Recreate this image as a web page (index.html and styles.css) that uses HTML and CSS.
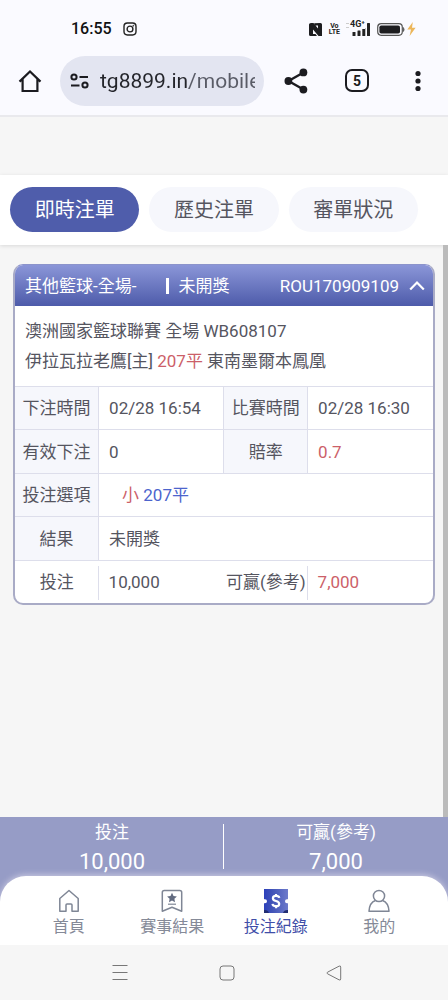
FILE: index.html
```html
<!DOCTYPE html>
<html lang="zh-Hant">
<head>
<meta charset="utf-8">
<meta name="viewport" content="width=device-width, initial-scale=1">
<title>投注紀錄</title>
<link rel="stylesheet" href="styles.css">
</head>
<body>
<header class="chrome">
  <div class="status">
    <div class="status-left">
      <time class="clock">16:55</time>
      <svg width="14" height="14" viewBox="0 0 14 14" fill="none" stroke="#222" stroke-width="1.4"><rect x="1" y="1" width="12" height="12" rx="3.4"/><circle cx="7" cy="7" r="2.9"/><circle cx="10.3" cy="3.7" r=".5" fill="#222" stroke-width=".6"/></svg>
    </div>
    <div class="status-right">
      <svg width="13" height="13" viewBox="0 0 13 13"><path d="M2 0h2.500L9 5.500V2.500H6.500L5 .3 11.500 0q1.500 0 1.500 1.500V13H9.500L4 6.500V11h2.500L8 13H1.500Q0 13 0 11.500V1.500Q0 0 2 0z" fill="#1d1d20"/></svg>
      <div class="volte"><span>Vo</span><span>LTE</span></div>
      <div class="signal">
        <span class="sim"></span>
        <svg width="19" height="13" viewBox="0 0 19 13" fill="#222"><rect x="1.5" y="9" width="3" height="4" rx=".5"/><rect x="6.500" y="7.500" width="3" height="5.500" rx=".5"/><rect x="11.300" y="5" width="3" height="8" rx=".5"/><rect x="16" y="0" width="3" height="13" rx=".5"/></svg>
        <span class="net">4G⁺</span>
      </div>
      <svg class="battery" width="28" height="13" viewBox="0 0 28 13"><rect x=".7" y=".7" width="24.600" height="11.600" rx="3.500" fill="none" stroke="#555" stroke-width="1.200"/><rect x="2.400" y="2.400" width="20.600" height="8.200" rx="1.800" fill="#1d1d20"/><path d="M26.500 4.500q1.200 2 0 4z" fill="#444" stroke="#444" stroke-width=".6"/></svg>
      <svg class="bolt" width="9" height="14" viewBox="0 0 9 14"><path d="M5.800 0 .3 7.500H4L2.600 14 8.600 5.800H5z" fill="#ecb65a"/></svg>
    </div>
  </div>
  <div class="toolbar">
    <button class="tool" type="button" aria-label="主畫面"><svg width="24" height="24" viewBox="0 0 24 24" fill="none" stroke="#1b1b20" stroke-width="2.200" stroke-linejoin="miter"><path d="M1.500 12.600 12 2.500l10.500 10.100M4.600 10v12h14.800V10"/></svg></button>
    <div class="address">
      <button class="site-info" type="button" aria-label="網站資訊"><svg width="20" height="16" viewBox="0 0 20 16" fill="none" stroke="#1b1b20" stroke-width="2"><circle cx="4" cy="4" r="2.600"/><path d="M9.500 4H18M1 12.500h8.500"/><circle cx="15" cy="12" r="2.600"/></svg></button>
      <input class="url" type="text" aria-label="網址" value="tg8899.in/mobile">
    </div>
    <div class="actions">
      <button class="tool" type="button" aria-label="分享"><svg width="24" height="26" viewBox="0 0 24 26" fill="#1b1b20"><path d="M19.500 4.500 4.500 13l15 8.500" fill="none" stroke="#1b1b20" stroke-width="2.400"/><circle cx="19.400" cy="4.400" r="3.900"/><circle cx="4.400" cy="13" r="3.900"/><circle cx="19.400" cy="21.600" r="3.900"/></svg></button>
      <button class="tool tabs-count" type="button" aria-label="5 個分頁">5</button>
      <button class="tool" type="button" aria-label="更多"><svg width="6" height="22" viewBox="0 0 6 22" fill="#1b1b20"><circle cx="3" cy="3.500" r="2.600"/><circle cx="3" cy="11" r="2.600"/><circle cx="3" cy="18.500" r="2.600"/></svg></button>
    </div>
  </div>
</header>

<nav class="filters" aria-label="注單類型">
  <button class="filter filter-active" type="button">即時注單</button>
  <button class="filter" type="button">歷史注單</button>
  <button class="filter" type="button">審單狀況</button>
</nav>

<main class="content">
  <article class="ticket">
    <header class="ticket-head">
      <span class="ticket-type">其他籃球-全場-</span>
      <span class="ticket-state">未開獎</span>
      <span class="ticket-id">ROU170909109</span>
      <button class="collapse" type="button" aria-label="收合"><svg width="16" height="11" viewBox="0 0 16 11" fill="none" stroke="#fff" stroke-width="2.200"><path d="m1.200 9.500 6.800-7 6.800 7"/></svg></button>
    </header>
    <div class="match">
      <p>澳洲國家籃球聯賽 全場 WB608107</p>
      <p>伊拉瓦拉老鷹[主] <span class="red">207平</span> 東南墨爾本鳳凰</p>
    </div>
    <table class="details">
      <tr><th scope="row">下注時間</th><td>02/28 16:54</td><th scope="row">比賽時間</th><td>02/28 16:30</td></tr>
      <tr><th scope="row">有效下注</th><td>0</td><th scope="row">賠率</th><td class="red">0.7</td></tr>
      <tr><th scope="row">投注選項</th><td class="pick" colspan="3"><span class="red">小</span> <span class="blue">207平</span></td></tr>
      <tr><th scope="row">結果</th><td colspan="3">未開獎</td></tr>
      <tr class="sum"><th scope="row">投注</th><td>10,000</td><th scope="row">可贏(參考)</th><td class="red">7,000</td></tr>
    </table>
  </article>
  <div class="scroll-thumb"></div>
</main>

<footer class="bottom">
  <dl class="totals">
    <div class="total"><dt>投注</dt><dd>10,000</dd></div>
    <div class="total"><dt>可贏(參考)</dt><dd>7,000</dd></div>
  </dl>
  <nav class="menu" aria-label="主選單">
    <a class="menu-item" href="#home"><svg width="24" height="24" viewBox="0 0 24 24" fill="none" stroke="#7f8695" stroke-width="1.500" stroke-linejoin="round"><path d="M2.800 9.500 12 1.500l9.200 8v12.700H15V16q0-1-1-1h-4q-1 0-1 1v6.200H2.800z"/></svg>首頁</a>
    <a class="menu-item" href="#results"><svg width="24" height="24" viewBox="0 0 24 24" fill="none" stroke="#7f8695" stroke-width="1.500" stroke-linejoin="round"><path d="M2.300 3.500q0-2 2-2h15.400q2 0 2 2v18.700L12 18.300l-9.700 3.900z"/><path d="m12 3.800 1.500 3.200 3.400.4-2.500 2.400.6 3.500-3-1.700-3 1.700.6-3.500-2.500-2.400 3.400-.4z" fill="#626b80" stroke="none"/><path d="M8 15.200h8" stroke-width="1.200"/></svg>賽事結果</a>
    <a class="menu-item menu-active" href="#bets" aria-current="page"><svg width="24" height="24" viewBox="0 0 24 24"><defs><linearGradient id="tg" x1="0" x2="1"><stop offset="0" stop-color="#2c40bb"/><stop offset=".35" stop-color="#4254b8"/><stop offset="1" stop-color="#6d7acb"/></linearGradient></defs><path d="M0 0h24v10.500a2 2 0 0 0 0 3.500v10H0V14a2 2 0 0 0 0-3.500z" fill="url(#tg)"/><path d="M0 21q4-.3 5 3H0zM24 21q-4-.3-5 3h5z" fill="#222d72"/><path d="M0 10.300h1a2 2 0 0 1 0 4H0zM24 10.300h-1a2 2 0 0 0 0 4h1z" fill="#fff"/><path d="M15.300 8.900Q14.900 6.900 12 6.900T8.900 9.200Q8.900 11.200 12 12t3.200 2.900q0 2.300-3.200 2.300t-3.500-2.300M12 4.900v2M12 17.200v2" fill="none" stroke="#fff" stroke-width="2.200"/></svg>投注紀錄</a>
    <a class="menu-item" href="#me"><svg width="24" height="24" viewBox="0 0 24 24" fill="none" stroke="#7f8695" stroke-width="1.500" stroke-linejoin="round"><circle cx="12" cy="7" r="5.600"/><path d="M8.500 11.500Q2.500 13.500 2 22.300h20q-.5-8.800-6.500-10.800"/></svg>我的</a>
  </nav>
  <div class="system">
    <button type="button" aria-label="最近使用"><svg width="16" height="16" viewBox="0 0 16 16" stroke="#777" stroke-width="1"><path d="M.5 .5h15M.5 7.500h15M.5 14.500h15"/></svg></button>
    <button type="button" aria-label="首頁鍵"><svg width="16" height="16" viewBox="0 0 16 16" fill="none" stroke="#777"><rect x="1" y="1" width="14" height="14" rx="3"/></svg></button>
    <button type="button" aria-label="返回"><svg width="16" height="16" viewBox="0 0 16 16" fill="none" stroke="#777" stroke-linejoin="round"><path d="M1.500 7.200 13.200 1.100q1.500-.6 1.500 1v11.800q0 1.600-1.500 1L1.500 8.800q-1.200-.8 0-1.600z"/></svg></button>
  </div>
</footer>
</body>
</html>
```
FILE: styles.css
```css
* { box-sizing: border-box; }

body {
  margin: 0;
  min-height: 100vh;
  display: flex;
  flex-direction: column;
  background: #f6f6f6;
  color: #55555f;
  font: 17px/30px Roboto, "Noto Sans CJK TC", sans-serif;
}

button {
  display: flex;
  align-items: center;
  justify-content: center;
  margin: 0;
  padding: 0;
  border: 0;
  background: none;
  color: inherit;
  font: inherit;
}

svg { display: block; }
p, dl, dd { margin: 0; }
.red { color: #cc5f69; }
.blue { color: #4c64cd; }

/* Browser chrome */
.chrome {
  background: #fafaff;
  border-bottom: 2px solid #e9e9ed;
}

.status {
  display: flex;
  align-items: center;
  justify-content: space-between;
  height: 52px;
  padding: 6px 32px 0 71px;
}

.status-left, .status-right {
  display: flex;
  align-items: center;
}

.status-left { gap: 11px; }
.status-right { gap: 7px; }

.clock {
  color: #111;
  font-size: 16px;
  font-weight: 500;
}

.volte {
  display: grid;
  justify-items: center;
  color: #222;
  font-size: 7px;
  font-weight: 700;
  line-height: 6px;
}

.signal {
  position: relative;
  padding-left: 4px;
}

.net {
  position: absolute;
  left: 3px;
  top: -3px;
  background: #fafaff;
  color: #222;
  font-size: 9px;
  font-weight: 700;
  line-height: 9px;
}

.sim {
  position: absolute;
  left: -1px;
  top: 0;
  width: 3px;
  height: 5px;
  border: solid #ccc;
  border-width: 1px 0;
}

.bolt { margin-left: -5px; }

.toolbar {
  display: flex;
  align-items: center;
  height: 63px;
  padding: 0 18px 6px 18px;
}

.tool {
  width: 24px;
  height: 50px;
  flex: none;
}

.address {
  display: flex;
  align-items: center;
  flex: 1;
  min-width: 0;
  height: 50px;
  margin-left: 18px;
  padding: 0 9px 0 10px;
  border-radius: 25px;
  background: #e3e5f1;
}

.site-info {
  flex: none;
  margin-right: 10px;
}

.url {
  flex: 1;
  width: 0;
  min-width: 0;
  height: 30px;
  padding: 0;
  border: 0;
  background: linear-gradient(90deg, #24252b 88px, #595b66 89px);
  -webkit-background-clip: text;
  background-clip: text;
  color: transparent;
  font: 21px/30px Roboto, sans-serif;
}

.actions {
  display: flex;
  align-items: center;
  gap: 37px;
  margin-left: 20px;
}

.tabs-count {
  height: 23px;
  border: 2px solid #1b1b20;
  border-radius: 7px;
  color: #1b1b20;
  font-size: 14px;
  font-weight: 700;
  line-height: 18px;
}

/* Filters */
.filters {
  display: flex;
  gap: 10px;
  margin-top: 58px;
  padding: 12px 30px 13px 10px;
  background: #fff;
  box-shadow: 0 1px 4px rgba(0, 0, 0, .12);
}

.filter {
  flex: 1;
  height: 45px;
  padding-top: 1px;
  border-radius: 23px;
  background: #f6f7fc;
  font-size: 20px;
}

.filter-active {
  background: #4f5dab;
  color: #fff;
}

/* Ticket */
.content {
  position: relative;
  flex: 1;
  padding: 19px 13px 24px;
}

.scroll-thumb {
  position: absolute;
  top: 0;
  right: 0;
  bottom: 0;
  width: 5px;
  background: #bbb;
}

.ticket {
  overflow: hidden;
  border: 2px solid #a9abc6;
  border-top: 1px solid #8c94cb;
  border-radius: 10px;
  background: #fff;
}

.ticket-head {
  display: flex;
  align-items: center;
  height: 41px;
  padding: 0 8px 0 10px;
  background: linear-gradient(#8b96d8, #4d5baa);
  color: #fff;
}

.ticket-state {
  display: flex;
  align-items: center;
  gap: 9px;
  margin-left: 30px;
}

.ticket-state::before {
  content: "";
  width: 3px;
  height: 16px;
  background: #fff;
}

.ticket-id { margin-left: auto; }
.collapse { margin-left: 10px; }

.match { padding: 10px; }

.details {
  width: 100%;
  height: 217px;
  table-layout: fixed;
  border-collapse: collapse;
}

.details th, .details td {
  border-top: 1px solid #dddeeb;
  padding: 0;
  font-weight: 400;
}

.details th {
  width: 20%;
  border-right: 1px solid #dddeeb;
  background: #f6f7fc;
  text-align: center;
  white-space: nowrap;
}

.details td {
  width: 30%;
  padding-left: 10px;
}

.details td + th { border-left: 1px solid #dddeeb; }
.details .pick { padding-left: 23px; }

.details .sum th {
  border-right: 0;
  border-left: 0;
  background: linear-gradient(#dddeeb, #dddeeb) right 60% / 1px 34px no-repeat;
}

/* Totals and menus */
.bottom {
  position: sticky;
  bottom: 0;
  background: #969cc6;
}

.totals {
  display: flex;
  height: 59px;
  color: #fff;
  text-align: center;
}

.total {
  flex: 1;
  background: linear-gradient(#fff, #fff) right 7px / 1px 45px no-repeat;
}

.total:last-child { background: none; }

.total dd { font-size: 22px; }

.menu {
  display: flex;
  padding: 13px 17px 4px;
  border-radius: 26px 26px 0 0;
  background: #fff;
  box-shadow: 0 -1px 6px rgba(240, 235, 245, .6);
}

.menu-item {
  display: flex;
  flex: 1;
  flex-direction: column;
  align-items: center;
  color: #858a98;
  font-size: 16px;
  line-height: 28px;
  text-decoration: none;
}

.menu-active { color: #3f4ea8; }

.system {
  display: flex;
  justify-content: center;
  gap: 91px;
  height: 55px;
  padding-left: 5px;
  background: #f6f6f6;
}
```
